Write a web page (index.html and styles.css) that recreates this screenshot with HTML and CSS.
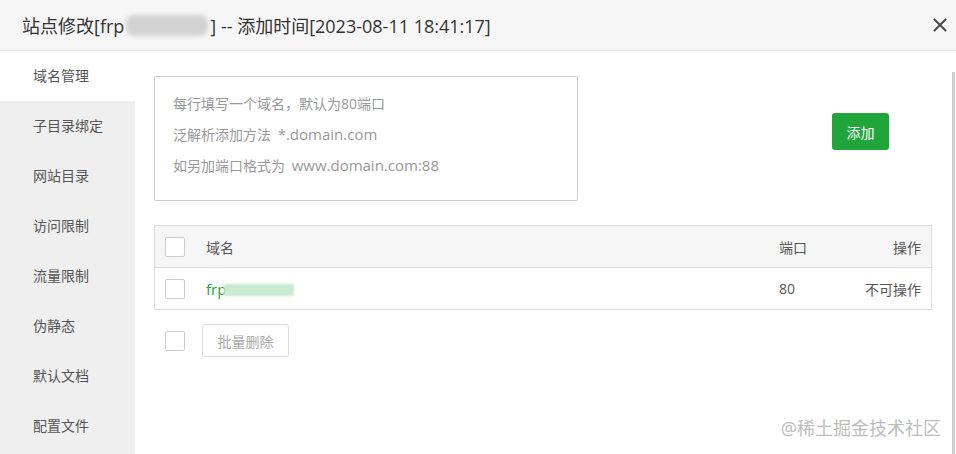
FILE: index.html
```html
<!DOCTYPE html>
<html>
<head>
    <meta charset="utf-8">
    <title>站点修改</title>
    <link rel="stylesheet" href="styles.css">
</head>
<body>
    <div class="dialog">
        <div class="dlg-head">
            <span class="dlg-title">站点修改[frp<span class="mask"></span>] -- 添加时间[2023-08-11 18:41:17]</span>
            <svg class="dlg-close" width="16" height="16" viewBox="0 0 16 16">
                <path d="M2 2 L14 14 M14 2 L2 14" stroke="#4a4a4a" stroke-width="2" fill="none"/>
            </svg>
        </div>
        <div class="dlg-body">
            <ul class="side">
                <li class="on">域名管理</li>
                <li>子目录绑定</li>
                <li>网站目录</li>
                <li>访问限制</li>
                <li>流量限制</li>
                <li>伪静态</li>
                <li>默认文档</li>
                <li>配置文件</li>
            </ul>
            <div class="main">
                <div class="add-row">
                    <div class="domain-input">
                        <p>每行填写一个域名，默认为80端口</p>
                        <p>泛解析添加方法 <span class="en">*.domain.com</span></p>
                        <p>如另加端口格式为 <span class="en">www.domain.com:88</span></p>
                    </div>
                    <button class="btn-add">添加</button>
                </div>
                <table class="domains">
                    <thead>
                        <tr>
                            <th class="c-chk"><span class="chk"></span></th>
                            <th>域名</th>
                            <th class="c-port">端口</th>
                            <th class="c-op">操作</th>
                        </tr>
                    </thead>
                    <tbody>
                        <tr>
                            <td class="c-chk"><span class="chk"></span></td>
                            <td><span class="link">frp</span><span class="mask green"></span></td>
                            <td class="c-port">80</td>
                            <td class="c-op">不可操作</td>
                        </tr>
                    </tbody>
                </table>
                <div class="batch">
                    <span class="chk"></span>
                    <button class="btn-del">批量删除</button>
                </div>
            </div>
            <div class="scroll"><div class="thumb"></div></div>
        </div>
        <div class="watermark">@稀土掘金技术社区</div>
    </div>
</body>
</html>
```

FILE: styles.css
```css
html, body { margin: 0; padding: 0; }
body { width: 956px; height: 454px; overflow: hidden; background: #fff;
       font-family: "Open Sans", "Noto Sans CJK SC", sans-serif; color: #555; }

.dialog { position: relative; height: 454px; }
.dlg-head { height: 50px; background: #f6f6f6; border-bottom: 1px solid #e6e6e6;
            display: flex; align-items: center; justify-content: space-between; padding: 0 8px 0 22px; }
.dlg-title { font-size: 18px; color: #333; display: flex; align-items: center; }
.mask { display: inline-block; width: 82px; height: 21px; background: #d2d2d2; border-radius: 8px;
        filter: blur(2px); margin: 0 2px; }

.dlg-body { display: flex; height: 403px; }
.side { list-style: none; margin: 0; padding: 0; width: 135px; background: #efefef; }
.side li { height: 50px; line-height: 50px; padding-left: 33px; font-size: 14px; color: #555; }
.side li.on { background: #fff; }

.main { flex: 1; padding: 25px 20px 0 19px; }
.add-row { display: flex; align-items: flex-start; }
.domain-input { width: 404px; height: 111px; border: 1px solid #ccc; border-radius: 2px;
                padding: 12px 0 0 18px; box-sizing: content-box; }
.domain-input p { margin: 0; font-size: 14px; line-height: 30px; color: #999; }
.domain-input .en { font-size: 15px; margin-left: 3px; }
.btn-add { margin: 37px 0 0 254px; width: 57px; height: 37px; border: 0; border-radius: 3px;
           background: #20a53a; color: #fff; font-size: 14px; font-family: inherit; padding: 0; }

.domains { margin-top: 24px; width: 778px; border-collapse: collapse; border: 1px solid #ddd; font-size: 14px; }
.domains th { height: 41px; background: #f6f6f6; font-weight: normal; text-align: left; color: #555;
              border-bottom: 1px solid #ddd; padding: 0; }
.domains td { height: 41px; padding: 0; color: #555; }
.c-chk { width: 41px; padding-left: 10px !important; }
.c-port { width: 70px; }
.c-op { width: 72px; text-align: right !important; padding-right: 10px !important; }
.chk { display: block; width: 18px; height: 18px; border: 1px solid #ccc; border-radius: 2px; background: #fff; }
.link { color: #20a53a; font-size: 15px; }
.mask.green { width: 70px; height: 12px; background: #cbead2; border-radius: 1px; filter: blur(1px);
              vertical-align: -1px; margin-left: -2px; }

.batch { display: flex; align-items: center; margin-top: 14px; padding-left: 11px; }
.btn-del { margin-left: 17px; width: 87px; height: 33px; border: 1px solid #ddd; border-radius: 3px;
           background: #fff; color: #aaa; font-size: 14px; font-family: inherit; padding: 0; }

.scroll { width: 4px; background: #fff; }
.thumb { margin-top: 21px; width: 3px; height: 382px; background: #cfcfcf; }

.watermark { position: absolute; right: 15px; bottom: 14px; font-size: 18px; color: #bdbdbd; }
```
